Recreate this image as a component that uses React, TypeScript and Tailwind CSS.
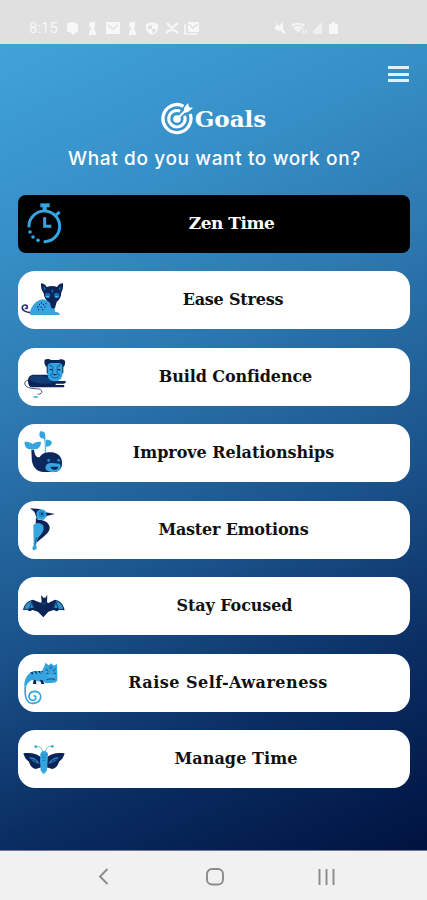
import type { ReactNode } from "react";

const SKY = "#35a4df";
const NAVY = "#0b2458";

function Stopwatch() {
 return (
  <svg className="w-[60px] h-[58px] shrink-0" viewBox="24 15 180 174" fill="none" stroke={SKY} strokeWidth="9">
   <path d="M57 112a46 46 0 1 1 44 43" />
   <path d="M104 82v27h20" />
   <path d="M91 46h28" strokeWidth="12" />
   <path d="M104 50v14" strokeWidth="12" />
   <path d="M137 76l12-10" />
   <g fill={SKY} stroke="none">
    <circle cx="60" cy="126" r="5.5" />
    <circle cx="69" cy="141" r="5.5" />
    <circle cx="84" cy="151" r="5.5" />
   </g>
  </svg>
 );
}

function Leopard() {
 return (
  <svg className="w-[60px] h-[58px] shrink-0" viewBox="24 18 180 174">
   <path d="M64 143C46 142 35 135 37 126c2-8 16-8 15 1-1 5-6 4-6 1" fill="none" stroke="#2b2767" strokeWidth="5" />
   <path d="M59 146c5-25 19-40 39-43l31 8 7 30c10 0 13 3 13 9H68c-5 0-8-1-9-4z" fill={SKY} />
   <path d="M93 55c7 0 14 5 17 11 10-4 22-4 31 0 4-7 11-12 18-11 1 12-1 20-5 27 0 14-6 23-14 29l-5 18c-4 3-9 2-12-2l-3-14c-12-5-18-15-19-28-6-8-9-18-8-30z" fill={NAVY} />
   <g fill="#176eb0">
    <circle cx="113" cy="91" r="8" />
    <circle cx="140" cy="91" r="8" />
    <path d="M99 64l8 6-4 8zM152 64l-6 7 5 7zM124 74h6l-3 12z" />
   </g>
   <path d="M108 94l9 2M136 96l9-2" stroke="#48b9ec" strokeWidth="4" />
   <path d="M82 126h3M87 119h3M93 114h3M99 119h3M92 127h3M84 134h3M103 126h3M97 134h3M106 116h3" stroke={NAVY} strokeWidth="4" />
  </svg>
 );
}

function Lion() {
 return (
  <svg className="w-[60px] h-[58px] shrink-0" viewBox="24 16 180 174">
   <path d="M60 112c-17 0-19 11-12 18 7 8 29 8 39 9 11 2 11 14 2 15l-6 1" fill="none" stroke="#1c2d50" strokeWidth="2.5" />
   <path d="M54 114c0-13 9-19 20-18h39l23 19h30c4 3 1 7-5 8h-24v4h25c3 4 0 7-5 7H69c-10 0-15-7-15-20z" fill={NAVY} />
   <path d="M60 103c12-7 35-5 52 0l17 18c-25 5-48 0-68-7z" fill="#123d77" />
   <path d="M104 51c7-4 16-2 19 1h22c7-4 16-2 20 3 1 9-1 15-5 18v17c-3 4-8 5-11 5h-30c-6 0-9-3-9-7V73c-7-5-8-14-6-22z" fill={NAVY} />
   <path d="M113 66c7-7 15-5 22-5s15-2 22 5v31c-1 13-11 19-22 19s-22-6-22-19z" fill={SKY} />
   <path d="M117 66l11 6v20l-8 7M153 66l-11 6v20l8 7M124 102c7 5 15 5 22 0" fill="none" stroke="#1473b4" strokeWidth="4" />
   <path d="M119 81h8M143 81h8M130 96h10" stroke={NAVY} strokeWidth="4" />
   <path d="M72 163h10" stroke={SKY} strokeWidth="4" strokeLinecap="round" />
  </svg>
 );
}

function Whale() {
 return (
  <svg className="w-[60px] h-[58px] shrink-0" viewBox="24 18 180 174">
   <path d="M106 107V77c0-12-2-18-6-23" fill="none" stroke="#66bfe7" strokeWidth="4" />
   <path d="M91 40c8-2 15 3 15 12v10c-11 1-18-4-18-12 0-4 1-7 3-10zM108 66c7-2 16 1 18 8-2 8-9 12-18 12z" fill={SKY} />
   <path d="M44 71c10 0 18 1 24 7 6-6 14-7 25-7 0 15-8 23-20 23H60c-12-2-17-10-16-23z" fill={SKY} />
   <path d="M64 95h8c2 16 7 25 17 22 9-13 22-15 37-14 20 2 30 15 30 31 1 19-11 29-29 28H99c-22-1-34-19-34-44z" fill="#0d285c" />
   <path d="M108 143c3-7 10-9 18-8l23 2c5 8 3 18-5 23-11 4-26 3-34-3-4-4-5-10-2-14z" fill={SKY} />
   <path d="M121 146h23v4c-3 7-18 7-21 0z" fill={NAVY} />
   <circle cx="116" cy="127" r="4.5" fill="#238cc7" />
   <circle cx="146" cy="127" r="4.5" fill="#238cc7" />
  </svg>
 );
}

function Kingfisher() {
 return (
  <svg className="w-[60px] h-[58px] shrink-0" viewBox="24 18 180 174">
   <path d="M60 40l29 2 15 8-24 18-7-18z" fill={NAVY} />
   <path d="M103 51l32 6-29 7z" fill="#15214c" />
   <path d="M79 54c4-14 22-15 29-4l2 14-8 10H82z" fill={SKY} />
   <circle cx="95" cy="57" r="9" fill="#1686c6" />
   <circle cx="96" cy="56" r="3" fill={NAVY} />
   <path d="M78 66l6 9c15-2 30 4 35 20 2 18-16 27-38 47l-5-35z" fill={NAVY} />
   <path d="M70 90c8-9 22-8 30 2 4 15-6 25-16 37l-6 22c5 6 1 15-6 15-7-3-5-10-1-15z" fill={SKY} />
   <path d="M78 126l4 2-6 21h-3z" fill="#1b659d" />
  </svg>
 );
}

function Bat() {
 return (
  <svg className="w-[60px] h-[58px] shrink-0" viewBox="24 15 180 174">
   <path d="M39 114c3-16 14-29 30-31l22 9 4-2-2-21 7 8h6l6-8-1 22 4 2 20-10c16 2 26 15 29 32l-16-2-8 5-9-4-16 5-15 17-16-17-16-5-9 4-8-5z" fill={NAVY} />
   <path d="M43 110c3-12 12-21 23-23l7 22-12-2-6 4zM160 110c-3-12-12-21-23-23l-7 22 12-2 6 4z" fill="#2c93cb" />
   <path d="M66 88l-8 22M66 88l5 22M137 88l8 22M137 88l-5 22" stroke={NAVY} strokeWidth="2.5" />
   <path d="M95 92l6 5 7-5" fill="none" stroke="#2c75af" strokeWidth="2" />
  </svg>
 );
}

function Chameleon() {
 return (
  <svg className="w-[60px] h-[58px] shrink-0" viewBox="24 18 180 174">
   <path d="M47 106c-6 41 4 62 23 60 28-2 29-35 5-36-23 0-23 27-6 27 11 0 11-14 2-14" fill="none" stroke={SKY} strokeWidth="5" />
   <path d="M43 112c0-22 12-39 29-43h29l9 27-19 5-25-5c-9 5-15 11-19 21z" fill={SKY} />
   <path d="M61 74l7-3 1 9M73 70h6l2 10M84 69h6l2 10M94 68h6l1 10M71 95l7 2 1 11H69zM90 95l9 2 4 11h-9z" fill={NAVY} />
   <path d="M102 58l4-14 10 8 8-6 7 7 10-5 1 28v21c-3 7-9 8-19 8h-15c-7-2-10-7-10-13V64z" fill={SKY} />
   <path d="M107 63l8 6M137 63l-8 6M109 76h7M131 76h7M110 95c8-3 17-3 25 0" fill="none" stroke="#164e8a" strokeWidth="3" />
   <path d="M117 52l5 5 6-5-2 12h-7z" fill="#2380bd" />
   <path d="M113 84h22" stroke="#62bee9" strokeWidth="3" />
  </svg>
 );
}

function Moth() {
 return (
  <svg className="w-[60px] h-[58px] shrink-0" viewBox="24 16 180 174">
   <path d="M40 86c22-4 43 1 57 15v26l-20 6c-14-4-18-14-20-22-9-5-14-14-17-25zM164 86c-22-4-43 1-57 15v26l20 6c14-4 18-14 20-22 9-5 14-14 17-25z" fill={NAVY} />
   <path d="M58 97c13-1 25 8 31 20-13-1-26-8-31-20zM146 97c-13-1-25 8-31 20 13-1 26-8 31-20z" fill="#267cb4" />
   <path d="M61 103l17 5M66 111l14 2M143 103l-17 5M138 111l-14 2" stroke={NAVY} strokeWidth="2" />
   <path d="M98 83c-2-14-8-20-19-16M106 83c2-14 9-20 20-17" fill="none" stroke="#62bce1" strokeWidth="3" />
   <circle cx="77" cy="66" r="4" fill={SKY} />
   <circle cx="127" cy="65" r="4" fill={SKY} />
   <path d="M91 88c2-12 21-12 23 0l-1 20-2 29-8 10h-4l-7-10-2-29z" fill={SKY} />
   <path d="M95 91h16M96 99h13M97 107h10" stroke="#1686b9" strokeWidth="3" />
  </svg>
 );
}

type Goal = { label: string; icon: ReactNode; text: string };

const goals: Goal[] = [
 { label: "Ease Stress", icon: <Leopard />, text: "tracking-[-0.2px] pr-[22px]" },
 { label: "Build Confidence", icon: <Lion />, text: "tracking-[-0.1px] pr-[17px]" },
 { label: "Improve Relationships", icon: <Whale />, text: "tracking-[-0.05px] pr-[21px]" },
 { label: "Master Emotions", icon: <Kingfisher />, text: "tracking-[-0.2px] pr-[21px]" },
 { label: "Stay Focused", icon: <Bat />, text: "tracking-[-0.1px] pr-[19px]" },
 { label: "Raise Self-Awareness", icon: <Chameleon />, text: "tracking-[0.48px] pr-[32px]" },
 { label: "Manage Time", icon: <Moth />, text: "tracking-[0.1px] pr-[16px]" },
];

function StatusBar() {
 return (
  <header className="h-11 shrink-0 bg-[#e0e0e0] pt-[12px] pl-[29px] flex items-center text-[#f7f7f7]">
   <span className="w-[37px] font-['Roboto',sans-serif] text-[15px] leading-none">8:15</span>
   <svg width="135" height="14" viewBox="0 0 135 14" fill="currentColor">
    <path d="M1 2l6-1 5 2v7l-5 4-3-3H1z" />
    <path d="M24 1h5v4l-1 2 2 5v2h-7v-2l2-5-2-2z" />
    <path d="M40 1h14v12H40z" />
    <path d="M42 4l5 4 5-4" fill="none" stroke="#e0e0e0" strokeWidth="1.5" />
    <path d="M64 1h5v4l-1 2 2 5v2h-7v-2l2-5-2-2z" />
    <path d="M80 3l6-2 6 2v4c0 3-3 6-6 7-3-1-6-4-6-7z" />
    <path d="M86 4v4h4c0 2-2 4-4 4V8h-4V5z" fill="#e0e0e0" />
    <path d="M101 2l5 5 6-5M100 12c3-4 9-4 12 0" fill="none" stroke="currentColor" strokeWidth="2.2" />
    <path d="M122 1h11v10h-11z" />
    <path d="M119 3v10h12" fill="none" stroke="currentColor" strokeWidth="1.5" />
    <path d="M123 3l4 4 5-4" fill="none" stroke="#e0e0e0" strokeWidth="1.5" />
   </svg>
   <svg className="ml-[74px]" width="66" height="14" viewBox="0 0 66 14" fill="currentColor">
    <path d="M0 1l4 4 4-4v7l3 4-2 1-4-4-2 2V9H0V5h2z" />
    <path d="M16 4c4-3 10-3 14 0l-7 8z" opacity=".8" />
    <path d="M18 6c3-2 7-2 10 0" fill="none" stroke="#e0e0e0" />
    <path d="M28 8v5M31 13V8" fill="none" stroke="currentColor" />
    <path d="M38 10l9-9v12h-9z" opacity=".7" />
    <path d="M54 3h3V1h3v2h3v10h-9z" />
   </svg>
  </header>
 );
}

function Target() {
 return (
  <svg width="33" height="33" viewBox="0 0 33 33" fill="none" stroke="#fff">
   <path d="M22.500 4.200A14 14 0 1 0 29.200 12" strokeWidth="3.3" />
   <path d="M19.2 9.2A8.2 8.2 0 1 0 23.6 13.800" strokeWidth="3" />
   <circle cx="16" cy="17" r="3.8" fill="#fff" stroke="none" />
   <path d="M16 17l10-10" strokeWidth="2.2" />
   <path d="M23 6l4-5 1 4 4 1-5 4-4 1z" fill="#fff" stroke="none" />
  </svg>
 );
}

export default function App() {
 return (
  <div className="w-[427px] h-[900px] flex flex-col overflow-hidden">
   <StatusBar />
   <main className="flex-1 bg-[linear-gradient(155deg,#41a2da_0%,#3690c7_20%,#2d78b0_38%,#1b548c_60%,#0a2d62_80%,#001340_100%)] border-b border-[#777391]">
    <div className="h-[55px] flex justify-end pr-[18px] pt-[22px]">
     <button type="button" aria-label="Menu" className="w-[21px] h-4 flex flex-col justify-between">
      <span className="block h-[3px] w-full bg-[#dcf2fc]" />
      <span className="block h-[3px] w-full bg-[#dcf2fc]" />
      <span className="block h-[3px] w-full bg-[#dcf2fc]" />
     </button>
    </div>
    <h1 className="h-[39px] flex items-center justify-center text-white font-['DejaVu_Serif',serif] font-bold text-[23px] leading-none">
     <Target />
     <span className="ml-px">Goals</span>
    </h1>
    <p className="h-[40px] pt-[9px] pl-[2px] text-center text-white font-['Inter',sans-serif] text-[19px] leading-[24px] tracking-[0.63px] font-medium whitespace-nowrap">
     What do you want to work on?
    </p>
    <div className="ml-[18px] mr-[17px] mt-[16.500px] flex flex-col gap-[18.500px]">
     <button type="button" className="h-[58px] rounded-lg bg-black text-white flex items-center">
      <Stopwatch />
      <span className="flex-1 pr-[25px] text-center font-['DejaVu_Serif',serif] font-bold text-[17px] tracking-[-0.5px]">Zen Time</span>
     </button>
     {goals.map((goal) => (
      <button key={goal.label} type="button" className="h-[58px] rounded-[17px] bg-white text-[#111] flex items-center">
       {goal.icon}
       <span className={`flex-1 text-center whitespace-nowrap font-['DejaVu_Serif',serif] font-bold text-[16px] ${goal.text}`}>{goal.label}</span>
      </button>
     ))}
    </div>
   </main>
   <nav className="h-[49px] shrink-0 bg-[#f1f1f1] flex items-center pl-[98px]">
    <svg width="238" height="20" viewBox="0 0 238 20" fill="none" stroke="#8b8b8b" strokeWidth="1.9" className="mt-[2px]">
     <path d="M9.500 2L2 9.500 9.500 17" />
     <rect x="109" y="2" width="16" height="15.500" rx="5" />
     <path d="M221.500 2v16M228.500 2v16M235.500 2v16" />
    </svg>
   </nav>
  </div>
 );
}
